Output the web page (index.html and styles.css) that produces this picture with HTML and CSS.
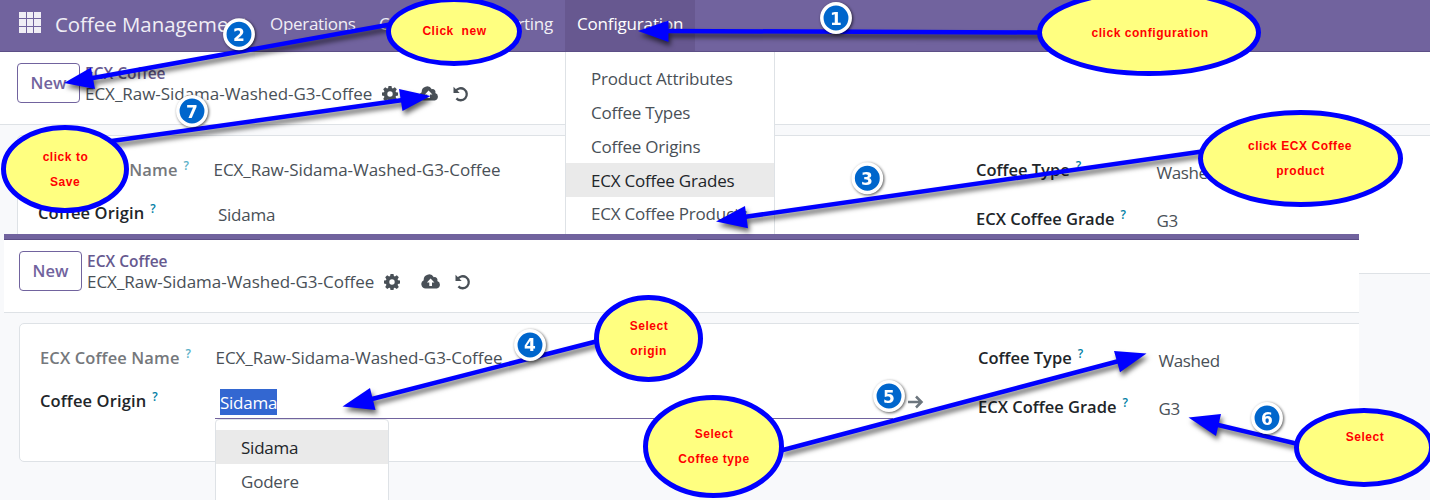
FILE: index.html
```html
<!DOCTYPE html>
<html lang="en">
<head>
<meta charset="utf-8">
<title>Coffee Management</title>
<link rel="stylesheet" href="styles.css">
</head>
<body>
<svg class="defs" width="0" height="0">
  <symbol id="gear" viewBox="0 0 16 16">
    <path fill-rule="evenodd" d="M6.5 0h3l.4 2.100 1 .4 1.900-1.200 2 2-1.200 1.900.4 1 2 .4v3l-2 .4-.4 1 1.200 1.900-2 2-1.900-1.200-1 .4-.4 2h-3l-.4-2-1-.4-1.900 1.200-2-2 1.200-1.900-.4-1L0 9.600v-3l2-.4.400-1-1.200-1.900 2-2 1.900 1.200 1-.4zM8 5.300a2.700 2.700 0 1 0 0 5.400 2.700 2.700 0 0 0 0-5.400z"/>
  </symbol>
  <symbol id="cloud" viewBox="0 0 20 15">
    <path fill-rule="evenodd" d="M4.600 14.500A4.400 4.400 0 0 1 2.700 6.200 5.400 5.400 0 0 1 12.800 3.200 2.900 2.900 0 0 1 16.300 7 3.900 3.900 0 0 1 15.800 14.500zM9.600 4.600 5.900 8.500h2.400v3.500h2.700V8.500h2.400z"/>
  </symbol>
  <symbol id="undo" viewBox="0 0 16 16">
    <path d="M2.600 5.200A6 6 0 1 1 3.400 12.400" fill="none" stroke="currentColor" stroke-width="2.300"/>
    <path d="M.5.700v6.200h6.200z"/>
  </symbol>
</svg>

<div class="page">
  <header class="navbar">
    <div class="apps"><i></i><i></i><i></i><i></i><i></i><i></i><i></i><i></i><i></i></div>
    <div class="brand">Coffee Management</div>
    <nav class="menu">
      <span class="menu-item operations">Operations</span>
      <span class="menu-item coffee">Coffee</span>
      <span class="menu-item reporting">Reporting</span>
      <span class="menu-item active">Configuration</span>
    </nav>
  </header>

  <main class="screen">
    <div class="panel">
      <button class="new">New</button>
      <div class="crumbs">
        <div class="crumb-link">ECX Coffee</div>
        <div class="crumb-row"><span class="crumb-name">ECX_Raw-Sidama-Washed-G3-Coffee</span>
          <svg class="i-gear"><use href="#gear"/></svg><svg class="i-cloud"><use href="#cloud"/></svg><svg class="i-undo"><use href="#undo"/></svg></div>
      </div>
    </div>
    <section class="sheet">
      <div class="fields left">
        <div class="label muted">ECX Coffee Name<sup>?</sup></div><div class="value">ECX_Raw-Sidama-Washed-G3-Coffee</div>
        <div class="label">Coffee Origin<sup>?</sup></div><div class="value input">Sidama</div>
      </div>
      <div class="fields right">
        <div class="label">Coffee Type<sup>?</sup></div><div class="value">Washed</div>
        <div class="label">ECX Coffee Grade<sup>?</sup></div><div class="value">G3</div>
      </div>
    </section>
  </main>

  <div class="dropdown config-menu">
    <div class="option">Product Attributes</div>
    <div class="option">Coffee Types</div>
    <div class="option">Coffee Origins</div>
    <div class="option hover">ECX Coffee Grades</div>
    <div class="option">ECX Coffee Products</div>
  </div>

  <main class="screen second">
    <div class="strip"><i></i><i></i></div>
    <div class="panel">
      <button class="new">New</button>
      <div class="crumbs">
        <div class="crumb-link">ECX Coffee</div>
        <div class="crumb-row"><span class="crumb-name">ECX_Raw-Sidama-Washed-G3-Coffee</span>
          <svg class="i-gear"><use href="#gear"/></svg><svg class="i-cloud"><use href="#cloud"/></svg><svg class="i-undo"><use href="#undo"/></svg></div>
      </div>
    </div>
    <section class="sheet">
      <div class="fields left">
        <div class="label muted">ECX Coffee Name<sup>?</sup></div><div class="value">ECX_Raw-Sidama-Washed-G3-Coffee</div>
        <div class="label">Coffee Origin<sup>?</sup></div>
        <div class="value input editing"><span class="selected">Sidama</span>
          <svg class="open" viewBox="0 0 16 14"><path d="M0 7h13M8 1.500 13.500 7 8 12.500"/></svg>
          <div class="dropdown origin-menu">
            <div class="option hover">Sidama</div>
            <div class="option">Godere</div>
          </div>
        </div>
      </div>
      <div class="fields right">
        <div class="label">Coffee Type<sup>?</sup></div><div class="value">Washed</div>
        <div class="label">ECX Coffee Grade<sup>?</sup></div><div class="value">G3</div>
      </div>
    </section>
  </main>

  <svg class="notes" width="1430" height="500" viewBox="0 0 1430 500">
    <g class="arrow"><path d="M1040 32.500 665 31"/><path class="head" d="M638 31l30.500-10.500v21.500z"/></g>
    <g class="arrow"><path d="M390 24.500 90 78.500"/><path class="head" d="M64 83 91 67.500 95 89z"/></g>
    <g class="arrow"><path d="M108 141.500 403 100"/><path class="head" d="M430.500 96 399 89l3.500 22z"/></g>
    <g class="arrow"><path d="M1202 151.500 744 217"/><path class="head" d="M716 221.500 745 206l3 22.300z"/></g>
    <g class="arrow"><path d="M598 341 370 399.500"/><path class="head" d="M342.500 406.500 370 388l5.500 22z"/></g>
    <g class="arrow"><path d="M781 450.500 1119 361"/><path class="head" d="M1146.500 353.500 1114 351l6 21.300z"/></g>
    <g class="arrow"><path d="M1298 444 1216 424.500"/><path class="head" d="M1188.500 417.500 1221 414l-5 22z"/></g>

    <g class="bubble">
      <ellipse cx="1149" cy="32.500" rx="109.500" ry="41"/><text x="1150" y="37">click configuration</text>
      <ellipse cx="454" cy="31.500" rx="65.500" ry="32"/><text x="454.500" y="34.500">Click&#160; new</text>
      <ellipse cx="65" cy="169" rx="61.500" ry="41.500"/><text x="65.500" y="161">click to</text><text x="65" y="186">Save</text>
      <ellipse cx="1300.500" cy="158.500" rx="100" ry="46"/><text x="1300" y="150">click ECX Coffee</text><text x="1300.500" y="175">product</text>
      <ellipse cx="648.500" cy="338.500" rx="52" ry="41"/><text x="649" y="329.500">Select</text><text x="648.500" y="355">origin</text>
      <ellipse cx="713.500" cy="446.500" rx="68" ry="49"/><text x="714" y="437.500">Select</text><text x="714" y="462.500">Coffee type</text>
      <ellipse cx="1364" cy="447.500" rx="67.500" ry="37"/><text x="1365" y="441">Select</text>
    </g>

    <g class="badge"><circle cx="836" cy="18" r="14.200"/><text x="836" y="24.500">1</text></g>
    <g class="badge"><circle cx="239" cy="34.300" r="14.200"/><text x="239" y="40.500">2</text></g>
    <g class="badge"><circle cx="867.300" cy="178.300" r="14.200"/><text x="867" y="184.500">3</text></g>
    <g class="badge"><circle cx="530" cy="345" r="14.200"/><text x="530" y="351">4</text></g>
    <g class="badge"><circle cx="889" cy="396" r="14.200"/><text x="889" y="402.500">5</text></g>
    <g class="badge"><circle cx="1267" cy="418" r="14.200"/><text x="1267" y="424.500">6</text></g>
    <g class="badge"><circle cx="192" cy="111" r="14.200"/><text x="192" y="117.500">7</text></g>
  </svg>
</div>
</body>
</html>
```
FILE: styles.css
```css
* { box-sizing: border-box; }
body {
  margin: 0;
  background: #f8f9fb;
  color: #495057;
  font: 400 17px/24px "Open Sans", sans-serif;
}
.defs { position: absolute; }
.page { position: relative; width: 1430px; height: 500px; overflow: hidden; }

/* Top bar */
.navbar {
  display: flex;
  height: 52px;
  padding-left: 19px;
  background: #71639e;
  border-bottom: 1px solid #5c4f86;
  color: #f0eef5;
  white-space: nowrap;
}
.apps {
  display: grid;
  grid-template-columns: repeat(3, 6.600px);
  grid-auto-rows: 6.400px;
  gap: 1px;
  width: 36px;
  margin-top: 12px;
}
.apps i { background: #f0eef5; }
.brand { width: 215px; padding-top: 12px; font-size: 20.400px; }
.menu { display: flex; letter-spacing: -0.300px; }
.menu-item { height: 51px; padding-top: 12px; }
.operations { width: 109px; }
.coffee { width: 99px; }
.reporting { width: 87px; }
.menu-item.active { width: 130px; padding-left: 12px; background: #675890; color: #fff; letter-spacing: -0.170px; }

/* Control panel */
.panel {
  display: flex;
  height: 73px;
  padding: 11px 0 0 17px;
  background: #fff;
  border-bottom: 1px solid #dee2e6;
}
.new {
  width: 63px;
  height: 40px;
  margin-right: 5px;
  padding: 0;
  background: #fff;
  border: 1px solid #71639e;
  border-radius: 4px;
  color: #71639e;
  font: 600 16.500px/24px "Open Sans", sans-serif;
}
.crumb-link { height: 19px; line-height: 20px; font-size: 15.500px; font-weight: 600; color: #66598f; }
.crumb-row { display: flex; height: 24px; }
.crumb-name { width: 297px; white-space: nowrap; letter-spacing: -0.030px; }
.crumb-row svg { fill: currentColor; flex: none; }
.i-gear { width: 16px; height: 16px; margin: 4px 21px 0 0; }
.i-cloud { width: 20px; height: 15px; margin: 4px 14px 0 0; }
.i-undo { width: 16px; height: 16px; margin-top: 4px; }

/* Form sheet */
.sheet {
  display: grid;
  grid-template-columns: 938px 1fr;
  width: 1500px;
  height: 139px;
  margin: 10px 0 0 17px;
  padding: 22px 0 0 20px;
  background: #fff;
  border: 1px solid #dee2e6;
  border-radius: 5px;
}
.fields { display: grid; align-content: start; }
.left { grid-template-columns: 175.500px 1fr; grid-template-rows: 43px 26px; }
.right { grid-template-columns: 180.500px 1fr; grid-template-rows: 49px 26px; }
.label { color: #212529; font-size: 16.500px; font-weight: 600; white-space: nowrap; }
.left .label { letter-spacing: 0.120px; }
.muted { color: #75787c; }
.label sup { display: inline-block; margin-left: 6px; font-size: 12px; line-height: 10px; vertical-align: 6px; color: #0180a5; }
.muted sup { color: #5bb0c7; }
.value { white-space: nowrap; letter-spacing: -0.040px; }
.right .value { padding-top: 3px; letter-spacing: -0.400px; }
.right .value:last-child { padding-top: 2px; }
.value.input { padding: 2px 0 0 4.500px; letter-spacing: -0.250px; }

/* Menus */
.dropdown { position: absolute; background: #fff; border: 1px solid #dee2e6; letter-spacing: -0.220px; }
.option { height: 34px; padding: 6px 0 0 25px; }
.hover { background: #eaeaea; color: #212529; }
.config-menu { left: 565px; top: 52px; width: 210px; height: 190px; padding-top: 9px; border-top: 0; }
.config-menu .option:last-child { padding-top: 5px; }

/* Second capture, laid over the first */
.second {
  position: absolute;
  left: 4px;
  top: 234px;
  width: 1355px;
  height: 266px;
  overflow: hidden;
  background: #f8f9fb;
}
.strip { display: flex; justify-content: space-between; align-items: flex-end; height: 6px; background: #71639e; }
.strip i { width: 256px; height: 1px; background: #5c4f86; }
.strip i:last-child { width: 662px; }
.second .panel { padding-left: 15px; }
.second .sheet { margin-left: 15px; }
.value.editing {
  position: relative;
  display: flex;
  justify-content: space-between;
  width: 708px;
  height: 30px;
  padding-top: 0;
}
.editing::after { content: ""; position: absolute; left: -0.500px; top: 29px; width: 678px; height: 1px; background: #71639e; }
.selected { height: 26px; padding-top: 2px; background: #3367d1; color: #fff; }
.editing .open { width: 16px; height: 14px; margin-top: 6px; fill: none; stroke: #6c757d; stroke-width: 2.500; }
.origin-menu { z-index: 1; left: -0.500px; top: 30px; width: 174px; height: 90px; padding-top: 10px; border-radius: 4px; }

/* Walkthrough annotations */
.notes { position: absolute; left: 0; top: 0; }
.arrow { fill: none; stroke: #0000ff; stroke-width: 4.500; filter: drop-shadow(2px 4px 2.500px rgba(0, 0, 0, 0.600)); }
.head { fill: #0000ff; stroke: none; }
.bubble ellipse { fill: #ffff80; stroke: #0000ff; stroke-width: 5; }
.bubble text { fill: #ff0000; font: 700 12px "Liberation Sans", sans-serif; letter-spacing: 0.550px; text-anchor: middle; }
.badge { filter: drop-shadow(1px 1px 1.500px rgba(0, 0, 0, 0.650)); }
.badge circle { fill: #0066cc; stroke: #fff; stroke-width: 3.500; }
.badge text { fill: #fff; font: 700 17px "DejaVu Sans", sans-serif; text-anchor: middle; }
```
